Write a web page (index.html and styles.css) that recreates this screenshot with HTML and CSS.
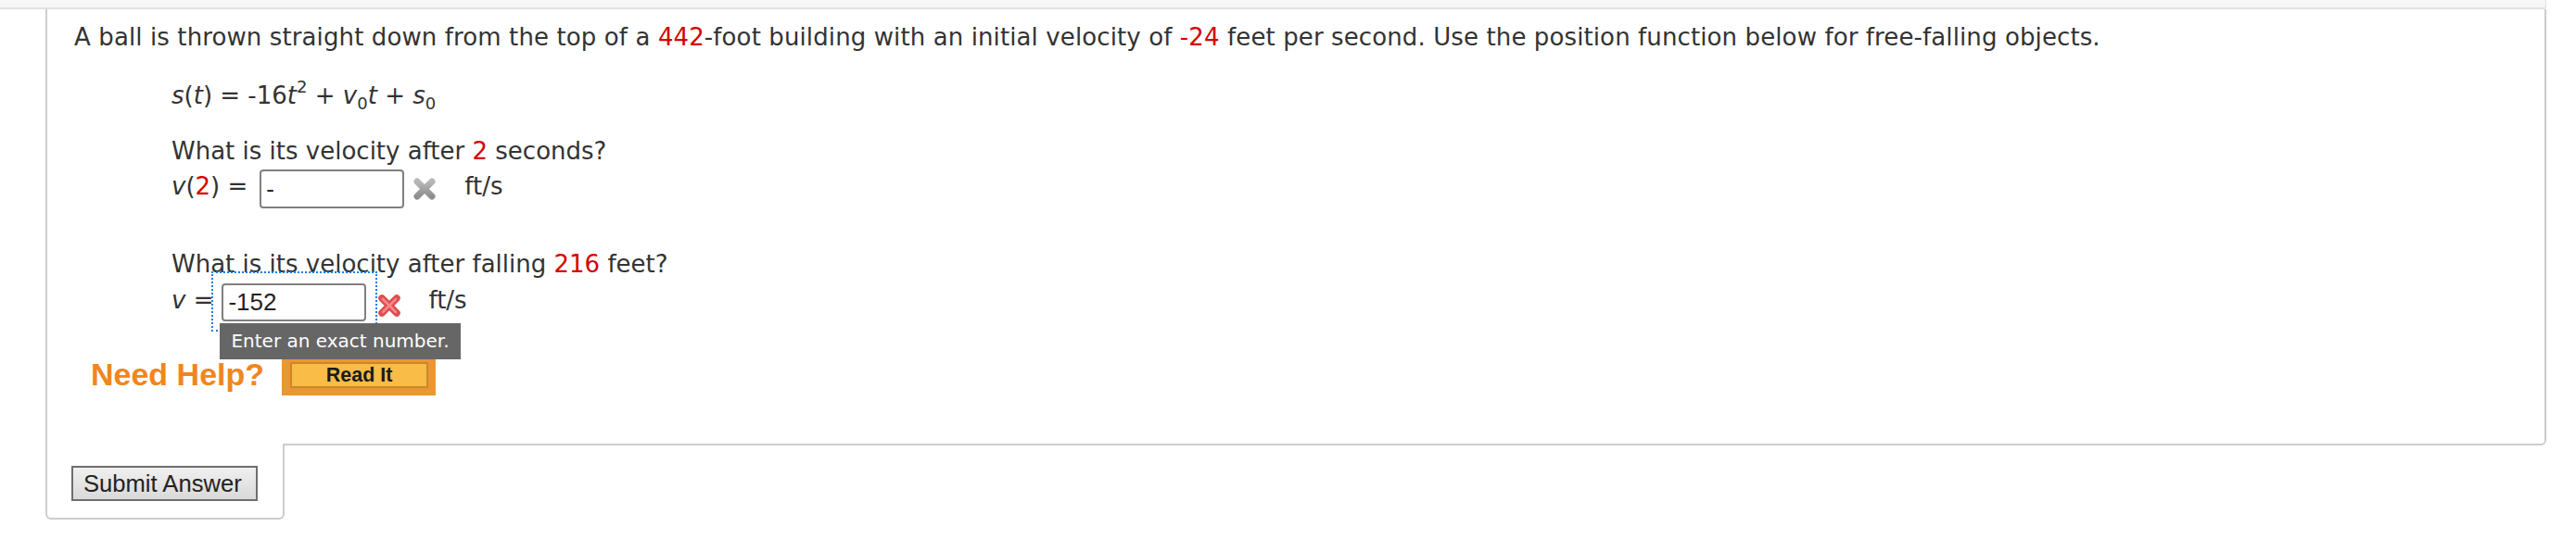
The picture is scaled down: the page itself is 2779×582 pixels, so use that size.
FILE: index.html
```html
<!DOCTYPE html>
<html lang="en">
<head>
<meta charset="utf-8">
<title>Question</title>
<link rel="stylesheet" href="styles.css">
</head>
<body>
<div class="topbar"></div>
<div class="panel">
  <p class="intro">A ball is thrown straight down from the top of a <span class="red">442</span>-foot building with an initial velocity of <span class="red">-24</span> feet per second. Use the position function below for free-falling objects.</p>
  <div class="indent">
    <p class="eq"><i>s</i>(<i>t</i>) = -16<i>t</i><sup>2</sup> + <i>v</i><sub>0</sub><i>t</i> + <i>s</i><sub>0</sub></p>
    <p class="q q1">What is its velocity after <span class="red">2</span> seconds?</p>
    <div class="ans ans1">
      <span class="lbl"><i>v</i>(<span class="red">2</span>) =</span>
      <span class="field"><input class="inp" type="text" value="-"></span>
      <svg class="mark" viewBox="0 0 28 28" aria-hidden="true">
        <defs><linearGradient id="gg" x1="0" y1="0" x2="0" y2="1"><stop offset="0" stop-color="#b8b8b8"/><stop offset="1" stop-color="#8e8e8e"/></linearGradient></defs>
        <path d="M6 6 L22 22 M22 6 L6 22" stroke="url(#gg)" stroke-width="7" stroke-linecap="round"/>
      </svg>
      <span class="unit">ft/s</span>
    </div>
    <p class="q q2">What is its velocity after falling <span class="red">216</span> feet?</p>
    <div class="ans ans2">
      <span class="lbl"><i>v</i> =</span>
      <span class="field focus"><input class="inp" type="text" value="-152"><span class="tip">Enter an exact number.</span></span>
      <svg class="mark" viewBox="0 0 28 28" aria-hidden="true">
        <path d="M6 6 L22 22 M22 6 L6 22" stroke="#e24c4f" stroke-width="7.5" stroke-linecap="round"/>
        <path d="M7 7 L21 21 M21 7 L7 21" stroke="#f28a8c" stroke-width="2.5" stroke-linecap="round"/>
      </svg>
      <span class="unit">ft/s</span>
    </div>
  </div>
  <div class="help">
    <span class="need">Need Help?</span>
    <button class="readit" type="button"><span class="readit-inner">Read It</span></button>
  </div>
</div>
<div class="tab">
  <button class="submit" type="button">Submit Answer</button>
</div>
</body>
</html>
```
FILE: styles.css
```css
* { box-sizing: border-box; }
html, body { margin: 0; padding: 0; background: #fff; }
body {
  font-family: "DejaVu Sans", Verdana, sans-serif;
  font-size: 26px;
  color: #333;
}
.red { color: #d40000; }

.topbar {
  height: 10px;
  margin-right: 32px;
  background: #f6f6f6;
  border-bottom: 2px solid #e0e0e0;
  border-right: 1px solid #e0e0e0;
  border-bottom-right-radius: 3px;
}

.panel {
  margin: 0 32px 0 49px;
  border: 2px solid #ccc;
  border-top: 0;
  border-bottom-right-radius: 6px;
  padding: 15px 0 52px 29px;
}

.intro { margin: 0; line-height: 30px; letter-spacing: 0.11px; }
.indent { margin-left: 105px; }
.eq { margin: 33px 0 0; line-height: 30px; }
.eq sup, .eq sub { font-size: 18px; line-height: 0; }
.eq sup { vertical-align: 12px; }
.eq sub { vertical-align: -6px; }

.q { margin: 0; line-height: 30px; }
.q1 { margin-top: 30px; }
.q2 { margin-top: 45px; }

.ans {
  display: flex;
  align-items: flex-start;
  line-height: 30px;
}
.ans1 { margin-top: 5px; height: 42px; }
.ans2 { margin-top: 6px; height: 41px; }
.lbl { margin-top: 3px; white-space: nowrap; }
.unit { margin-top: 3px; }

.field { position: relative; display: block; }
.ans1 .field { margin-left: 13px; }
.ans2 .field { margin-left: 9px; }
.inp {
  display: block;
  width: 156px;
  height: 41px;
  margin: 0;
  padding: 0 0 0 5px;
  border: 2px solid #808080;
  border-radius: 4px;
  background: #fff;
  font-family: "Liberation Sans", Arial, sans-serif;
  font-size: 26px;
  color: #222;
}
.ans1 .inp { height: 42px; }

.focus::before {
  content: "";
  position: absolute;
  left: -11px;
  right: -12px;
  top: -13px;
  bottom: -11px;
  border: 2px dotted #1a7de0;
}
.tip {
  position: absolute;
  left: -2px;
  top: 43px;
  z-index: 2;
  width: 260px;
  height: 39px;
  padding-left: 12px;
  background: #666;
  color: #fff;
  font-size: 20px;
  line-height: 39px;
  white-space: nowrap;
}

.mark { width: 28px; height: 28px; flex: none; }
.ans1 .mark { margin: 7px 0 0 8px; }
.ans2 .mark { margin: 10px 0 0 11px; }
.ans1 .unit { margin-left: 29px; }
.ans2 .unit { margin-left: 28px; }

.help {
  display: flex;
  align-items: flex-start;
  margin-top: 41px;
}
.need {
  margin-left: 18px;
  font-family: "Liberation Sans", Arial, sans-serif;
  font-weight: bold;
  font-size: 34px;
  line-height: 33px;
  color: #f0861c;
}
.readit {
  display: block;
  width: 166px;
  height: 39px;
  margin-left: 19px;
  padding: 3px 8px 8px 9px;
  border: 0;
  background: #eb9634;
  cursor: pointer;
}
.readit-inner {
  display: block;
  height: 28px;
  border: 2px solid #c98829;
  background: #f8bc47;
  font-family: "Liberation Sans", Arial, sans-serif;
  font-weight: bold;
  font-size: 21.5px;
  line-height: 24px;
  color: #1a1a1a;
  text-align: center;
}

.tab {
  position: relative;
  width: 258px;
  height: 82px;
  margin: -2px 0 0 49px;
  border: 2px solid #ccc;
  border-top: 0;
  border-radius: 0 0 6px 6px;
  background: #fff;
  padding: 24px 0 0 26px;
}
.submit {
  display: block;
  width: 201px;
  height: 38px;
  margin: 0;
  padding: 0 0 0 11px;
  border: 2px solid #6e6e6e;
  background: linear-gradient(#f0f0f0, #d9d9d9);
  font-family: "Liberation Sans", Arial, sans-serif;
  font-size: 25.6px;
  color: #222;
  text-align: left;
  line-height: 34px;
}
```
